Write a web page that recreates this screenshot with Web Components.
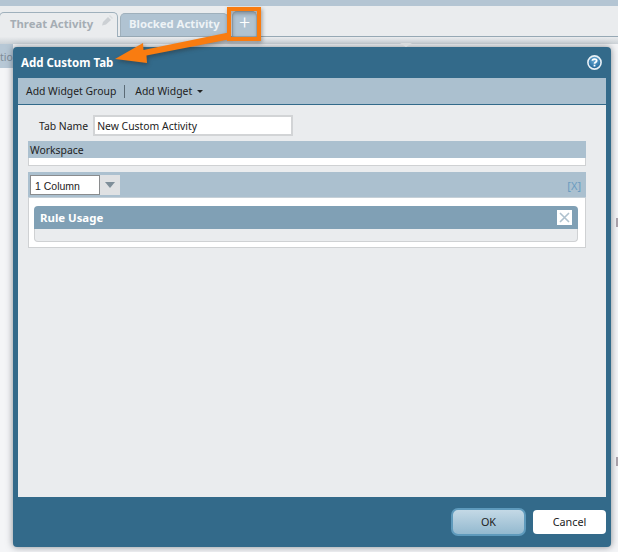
<!DOCTYPE html>
<html>
<head>
<meta charset="utf-8">
<title>Add Custom Tab</title>
<style>
html, body { margin: 0; padding: 0; }
body { font: 10.4px "Noto Sans", "Liberation Sans", sans-serif; color: #222; }
</style>
</head>
<body>
<app-shell>
  <tab-bar slot="tabs">
    <pan-tab active editable>Threat Activity</pan-tab>
    <pan-tab>Blocked Activity</pan-tab>
    <pan-tab add>+</pan-tab>
  </tab-bar>
  <span slot="side">tio</span>

  <modal-dialog heading="Add Custom Tab">
    <tool-bar slot="toolbar">
      <span>Add Widget Group</span>
      <span>Add Widget</span>
    </tool-bar>

    <form-row label="Tab Name" value="New Custom Activity"></form-row>
    <section-box heading="Workspace"></section-box>
    <layout-box>
      <column-select slot="bar">1 Column</column-select>
      <widget-card heading="Rule Usage"></widget-card>
    </layout-box>

    <pan-button slot="footer" primary>OK</pan-button>
    <pan-button slot="footer">Cancel</pan-button>
  </modal-dialog>

  <call-out></call-out>
</app-shell>

<script>
// base para no repetir attachShadow en cada clase
class Base extends HTMLElement {
    render(html) {
        this.attachShadow({ mode: 'open' });
        this.shadowRoot.innerHTML = html;
    }
}

class AppShell extends Base {
    constructor() {
        super();
        this.render(`
<style>
:host { display: flex; flex-direction: column; width: 618px; height: 552px; position: relative; overflow: hidden; background: #f4f5f7; }
.top { height: 6px; background: #b4c5d3; }
.gutter { height: 7px; background: linear-gradient(#e9ebed, #ccd2d7); flex: none; }
.lower { flex: 1; display: flex; justify-content: space-between; }
.side { width: 13px; height: 24px; background: #b7c8d6; color: #7d8b96; font-size: 10.4px; line-height: 26px; white-space: nowrap; }
.ticks { width: 2px; padding-top: 174px; display: flex; flex-direction: column; gap: 230px; }
.ticks i { display: block; width: 2px; height: 9px; background: #aba3ab; }
</style>
<div class="top"></div>
<slot name="tabs"></slot>
<div class="gutter"></div>
<div class="lower">
  <div class="side"><slot name="side"></slot></div>
  <div class="ticks"><i></i><i></i></div>
</div>
<slot></slot>`);
    }
}

class TabBar extends Base {
    constructor() {
        super();
        this.render(`
<style>
:host { display: flex; align-items: flex-end; gap: 2px; height: 30px; flex: none; background: #eaecee; border-bottom: 1px solid #96a8b4; box-sizing: content-box; }
</style>
<slot></slot>`);
    }
}

class PanTab extends Base {
    constructor() {
        super();
        const pencil = this.hasAttribute('editable') ? `
<svg class="pen" width="12" height="11" viewBox="0 0 12 11"><path d="M1 10.5 L2 7 L7 2 L10 5 L5 9.5 Z" fill="#ccd0d4"/><path d="M8 1 L9 0 L12 3 L11 4 Z" fill="#dadde0"/></svg>` : '';
        this.render(`
<style>
:host { display: block; width: 108px; height: 23px; box-sizing: border-box; border: 1px solid #9fb0bc; border-bottom: 0; border-radius: 5px 5px 0 0; background: #b0c3d2; color: #eef3f6; font-weight: 700; font-size: 11.3px; line-height: 20px; padding: 0 0 0 8px; position: relative; white-space: nowrap; }
:host([active]) { width: 119px; height: 25px; margin-left: -1px; margin-bottom: -1px; background: #eaecee; color: #a5adb4; padding: 0 0 0 10px; line-height: 22px; }
:host([add]) { width: 25px; height: 25px; margin-left: 2px; padding: 0; text-align: center; font: 300 19px Roboto, "Liberation Sans", sans-serif; color: #fff; line-height: 22px; }
.pen { position: absolute; right: 4px; top: 2px; }
</style>
<slot></slot>${pencil}`);
    }
}

class ModalDialog extends Base {
    constructor() {
        super();
        this.render(`
<style>
:host { position: absolute; left: 13px; top: 47px; width: 598px; height: 500px; box-sizing: border-box; background: #336a8a; border-radius: 4px; box-shadow: 0 0 7px rgba(40,50,60,.55); display: flex; flex-direction: column; padding: 0 5px; }
header { height: 31px; flex: none; display: flex; align-items: center; justify-content: space-between; color: #fff; font-weight: 700; font-size: 11.5px; padding: 0 4px 0 3px; }
main { flex: 1; background: #eaecee; display: flex; flex-direction: column; padding: 10px 20px 0 10px; }
footer { height: 50px; flex: none; display: flex; justify-content: flex-end; align-items: center; gap: 7px; }
.notch { position: absolute; left: 387px; top: -4px; border: 6px solid transparent; border-top: 4px solid #d9dcde; border-bottom: 0; }
</style>
<div class="notch"></div>
<header>
  <span>${this.getAttribute('heading')}</span>
  <svg width="15" height="15" viewBox="0 0 15 15">
    <defs><radialGradient id="g" cx=".5" cy=".3" r=".75"><stop offset="0" stop-color="#6fb0da"/><stop offset="1" stop-color="#14598e"/></radialGradient></defs>
    <circle cx="7.5" cy="7.5" r="6.6" fill="url(#g)" stroke="#e8f0f5" stroke-width="1.6"/>
    <path d="M5.4 5.8 C5.4 3.6 9.7 3.6 9.7 5.8 C9.7 7.3 7.5 7.2 7.5 8.8" fill="none" stroke="#fff" stroke-width="1.7"/>
    <rect x="6.6" y="9.7" width="1.8" height="1.8" fill="#fff"/>
  </svg>
</header>
<slot name="toolbar"></slot>
<main><slot></slot></main>
<footer><slot name="footer"></slot></footer>`);
    }
}

class ToolBar extends Base {
    constructor() {
        super();
        this.render(`
<style>
:host { display: flex; align-items: center; flex: none; height: 27px; box-sizing: border-box; background: #abc0cf; border-bottom: 1px solid #336a8a; padding: 0 0 0 8px; color: #222; }
::slotted(span:first-child) { padding-right: 8px; border-right: 1px solid #5b6b76; line-height: 13px; margin-right: 10px; }
.caret { margin-left: 5px; border: 3px solid transparent; border-top: 3px solid #222; border-bottom: 0; }
</style>
<slot></slot><div class="caret"></div>`);
    }
}

class FormRow extends Base {
    constructor() {
        super();
        this.render(`
<style>
:host { display: flex; align-items: center; gap: 5px; padding-left: 11px; height: 21px; color: #222; flex: none; }
.val { width: 200px; height: 21px; box-sizing: border-box; border: 2px solid #d2d4d6; background: #fff; padding-left: 2px; line-height: 18px; color: #222; }
</style>
<span>${this.getAttribute('label')}</span>
<div class="val">${this.getAttribute('value')}</div>`);
    }
}

class SectionBox extends Base {
    constructor() {
        super();
        this.render(`
<style>
:host { display: block; flex: none; margin-top: 5px; height: 25px; box-sizing: border-box; background: #fff; border: 1px solid #cfd1d3; border-top: 0; }
.h { height: 17px; margin: 0 -1px; padding-left: 2px; background: #abc0cf; line-height: 19px; color: #222; }
</style>
<div class="h">${this.getAttribute('heading')}</div>`);
    }
}

class LayoutBox extends Base {
    constructor() {
        super();
        this.render(`
<style>
:host { display: block; flex: none; margin-top: 6px; background: #fff; border: 1px solid #cfd1d3; border-top: 0; height: 76px; box-sizing: border-box; }
.bar { height: 26px; margin: 0 -1px; padding: 3px 5px 0 2px; box-sizing: border-box; background: #abc0cf; border-bottom: 1px solid #c5d0d8; display: flex; justify-content: space-between; }
.x { color: #6a9cc0; font-size: 11px; line-height: 22px; }
.body { padding: 8px 7px 0 5px; }
</style>
<div class="bar"><slot name="bar"></slot><span class="x">[X]</span></div>
<div class="body"><slot></slot></div>`);
    }
}

class ColumnSelect extends Base {
    constructor() {
        super();
        this.render(`
<style>
:host { display: flex; height: 20px; color: #222; }
.val { width: 70px; box-sizing: border-box; background: #fff; border: 1px solid #8a8c8e; padding-left: 4px; font: 10.5px/20px "Liberation Sans", sans-serif; }
.btn { width: 20px; background: #dfe1e3; display: flex; align-items: center; justify-content: center; }
.btn i { display: block; border: 5px solid transparent; border-top: 6px solid #7e8e99; border-bottom: 0; }
</style>
<div class="val"><slot></slot></div><div class="btn"><i></i></div>`);
    }
}

class WidgetCard extends Base {
    constructor() {
        super();
        this.render(`
<style>
:host { display: block; font-size: 11.4px; }
.h { height: 23px; background: #80a0b5; border-radius: 4px 4px 0 0; color: #fff; font-weight: 700; display: flex; align-items: center; justify-content: space-between; padding: 0 6px 0 6px; }
.b { height: 13px; box-sizing: border-box; background: #eaecee; border: 1px solid #cfd1d3; border-top: 0; border-radius: 0 0 4px 4px; }
.close { width: 15px; height: 15px; background: #fff; display: block; }
</style>
<div class="h"><span>${this.getAttribute('heading')}</span>
<svg class="close" viewBox="0 0 15 15"><path d="M3 3 L12 12 M12 3 L3 12" stroke="#aec1ce" stroke-width="1.6" fill="none"/></svg></div>
<div class="b"></div>`);
    }
}

class PanButton extends Base {
    constructor() {
        super();
        this.render(`
<style>
:host { display: block; width: 73px; height: 24px; box-sizing: border-box; background: #fff; border-radius: 4px; text-align: center; line-height: 24px; font-size: 10.8px; color: #222; }
:host([primary]) { width: 75px; height: 28px; border: 2px solid #5e9abc; border-radius: 7px; background: linear-gradient(#c4d9e6, #93b9cf); line-height: 24px; }
</style>
<slot></slot>`);
    }
}

// recuadro y flecha naranja encima de la captura
class CallOut extends Base {
    constructor() {
        super();
        this.render(`
<style>
:host { position: absolute; left: 0; top: 0; width: 618px; height: 100px; pointer-events: none; }
svg { display: block; filter: drop-shadow(1px 2px 2px rgba(40,40,40,.45)); }
</style>
<svg width="618" height="100" viewBox="0 0 618 100">
  <rect x="229" y="9" width="30" height="30" fill="none" stroke="#f97c10" stroke-width="4"/>
  <path d="M115 59 L143 43 L143.5 50 L231 32 L231 39 L146.5 55.5 L147 63 Z" fill="#f97c10"/>
</svg>`);
    }
}

customElements.define('app-shell', AppShell);
customElements.define('tab-bar', TabBar);
customElements.define('pan-tab', PanTab);
customElements.define('modal-dialog', ModalDialog);
customElements.define('tool-bar', ToolBar);
customElements.define('form-row', FormRow);
customElements.define('section-box', SectionBox);
customElements.define('layout-box', LayoutBox);
customElements.define('column-select', ColumnSelect);
customElements.define('widget-card', WidgetCard);
customElements.define('pan-button', PanButton);
customElements.define('call-out', CallOut);
</script>
</body>
</html>
